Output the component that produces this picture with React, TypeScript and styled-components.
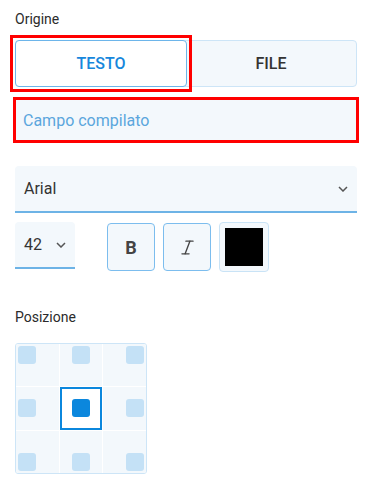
import React, { useState } from "react";
import styled, { createGlobalStyle } from "styled-components";
import { Italic } from "lucide-react";

const GlobalStyle = createGlobalStyle`
  body {
    margin: 0;
    background: #ffffff;
    font-family: Roboto, "Liberation Sans", sans-serif;
  }
`;

const Panel = styled.div`
  width: 369px;
  box-sizing: border-box;
  padding: 11px 12px 0 15px;
  display: flex;
  flex-direction: column;
`;

const Label = styled.div<{ $gap: number }>`
  font-size: 14px;
  line-height: 16px;
  color: #2b2b2b;
  margin-bottom: ${(p) => p.$gap}px;
`;

const Toggle = styled.div`
  display: flex;
  height: 47px;
  background: #f3f8fc;
  border: 1px solid #cde5f7;
  border-radius: 4px;
  box-sizing: border-box;
`;

const ToggleItem = styled.button<{ $active?: boolean; $focus?: boolean }>`
  position: relative;
  flex: 1;
  margin: -1px;
  border: 1px solid ${(p) => (p.$active ? "#6db5ea" : "transparent")};
  border-radius: 4px;
  background: ${(p) => (p.$active ? "#ffffff" : "transparent")};
  color: ${(p) => (p.$active ? "#1787dc" : "#333333")};
  font-family: Roboto, "Liberation Sans", sans-serif;
  font-size: 16px;
  font-weight: 500;
  cursor: pointer;
  outline: none;
  &::before {
    content: "";
    display: ${(p) => (p.$focus ? "block" : "none")};
    position: absolute;
    inset: -6px;
    border: 3px solid #ff0000;
    pointer-events: none;
  }
`;

const TextInput = styled.input`
  margin-top: 12px;
  height: 42px;
  box-sizing: border-box;
  border: none;
  background: #f3f8fc;
  padding: 0 8px;
  font-family: Roboto, "Liberation Sans", sans-serif;
  font-size: 16px;
  color: #5ba6dd;
  outline: 3px solid #ff0000;
  outline-offset: -1px;
  &::placeholder {
    color: #5ba6dd;
  }
`;

const Select = styled.div<{ $width?: number }>`
  display: flex;
  align-items: center;
  justify-content: space-between;
  box-sizing: border-box;
  width: ${(p) => (p.$width ? `${p.$width}px` : "100%")};
  height: 47px;
  padding: 0 9px;
  background: #f3f8fc;
  border-bottom: 2px solid #6db3e6;
  border-radius: 4px 4px 0 0;
  font-size: 16px;
  color: #333333;
`;

const Chevron = () => (
  <svg width="10" height="6" viewBox="0 0 10 6">
    <path d="M1 1l4 4 4-4" fill="none" stroke="#555" strokeWidth="1.5" />
  </svg>
);

const StyleRow = styled.div`
  display: flex;
  align-items: flex-start;
  margin-top: 9px;
  margin-bottom: 37px;
`;

const StyleButtons = styled.div`
  display: flex;
  gap: 8px;
  margin-left: 32px;
  margin-top: 1px;
`;

const StyleButton = styled.button`
  display: flex;
  align-items: center;
  justify-content: center;
  width: 48px;
  height: 48px;
  box-sizing: border-box;
  border: 1px solid #7cbdee;
  border-radius: 4px;
  background: #f3f8fc;
  color: #444444;
  font-family: Roboto, "Liberation Sans", sans-serif;
  font-size: 18px;
  font-weight: 700;
  padding: 0;
  cursor: pointer;
`;

const ColorButton = styled.button<{ $color: string }>`
  width: 50px;
  height: 50px;
  margin-top: -1px;
  box-sizing: border-box;
  border: 1px solid #c9e3f6;
  border-radius: 4px;
  background: #f3f8fc;
  padding: 5px;
  cursor: pointer;
  &::after {
    content: "";
    display: block;
    width: 100%;
    height: 100%;
    background: ${(p) => p.$color};
  }
`;

const Grid = styled.div`
  margin-top: 18px;
  width: 132px;
  height: 131px;
  box-sizing: border-box;
  display: grid;
  grid-template-columns: repeat(3, 1fr);
  grid-template-rows: repeat(3, 1fr);
  gap: 1px;
  background: #ffffff;
  border: 1px solid #cde5f7;
  border-radius: 3px;
  overflow: hidden;
`;

const Cell = styled.div<{ $h: string; $v: string; $active?: boolean }>`
  display: flex;
  justify-content: ${(p) => p.$h};
  align-items: ${(p) => p.$v};
  padding: 2px;
  background: ${(p) => (p.$active ? "#ffffff" : "#f3f8fc")};
  box-sizing: border-box;
  border: ${(p) => (p.$active ? "2px solid #0b87dd" : "none")};
  cursor: pointer;
  ${(p) => (p.$active ? "padding: 10px;" : "")}
`;

const Dot = styled.div<{ $active?: boolean }>`
  width: 18px;
  height: 18px;
  border-radius: 3px;
  background: ${(p) => (p.$active ? "#0b87dd" : "#c4e1f6")};
`;

const aligns = ["flex-start", "center", "flex-end"];

export default function App() {
  const [mode, setMode] = useState("testo");
  const [pos, setPos] = useState(4);

  return (
    <Panel>
      <GlobalStyle />
      <Label $gap={13}>Origine</Label>
      <Toggle>
        <ToggleItem $active={mode === "testo"} $focus onClick={() => setMode("testo")}>
          TESTO
        </ToggleItem>
        <ToggleItem $active={mode === "file"} onClick={() => setMode("file")}>
          FILE
        </ToggleItem>
      </Toggle>
      <TextInput placeholder="Campo compilato" />
      <div style={{ height: 25 }} />
      <Select>
        <span>Arial</span>
        <Chevron />
      </Select>
      <StyleRow>
        <Select $width={60}>
          <span>42</span>
          <Chevron />
        </Select>
        <StyleButtons>
          <StyleButton>B</StyleButton>
          <StyleButton>
            <Italic size={19} color="#444" strokeWidth={1.7} />
          </StyleButton>
          <ColorButton $color="#000000" />
        </StyleButtons>
      </StyleRow>
      <Label $gap={0}>Posizione</Label>
      <Grid>
        {Array.from({ length: 9 }).map((_, i) => (
          <Cell
            key={i}
            $h={aligns[i % 3]}
            $v={aligns[Math.floor(i / 3)]}
            $active={pos === i}
            onClick={() => setPos(i)}
          >
            <Dot $active={pos === i} />
          </Cell>
        ))}
      </Grid>
    </Panel>
  );
}
